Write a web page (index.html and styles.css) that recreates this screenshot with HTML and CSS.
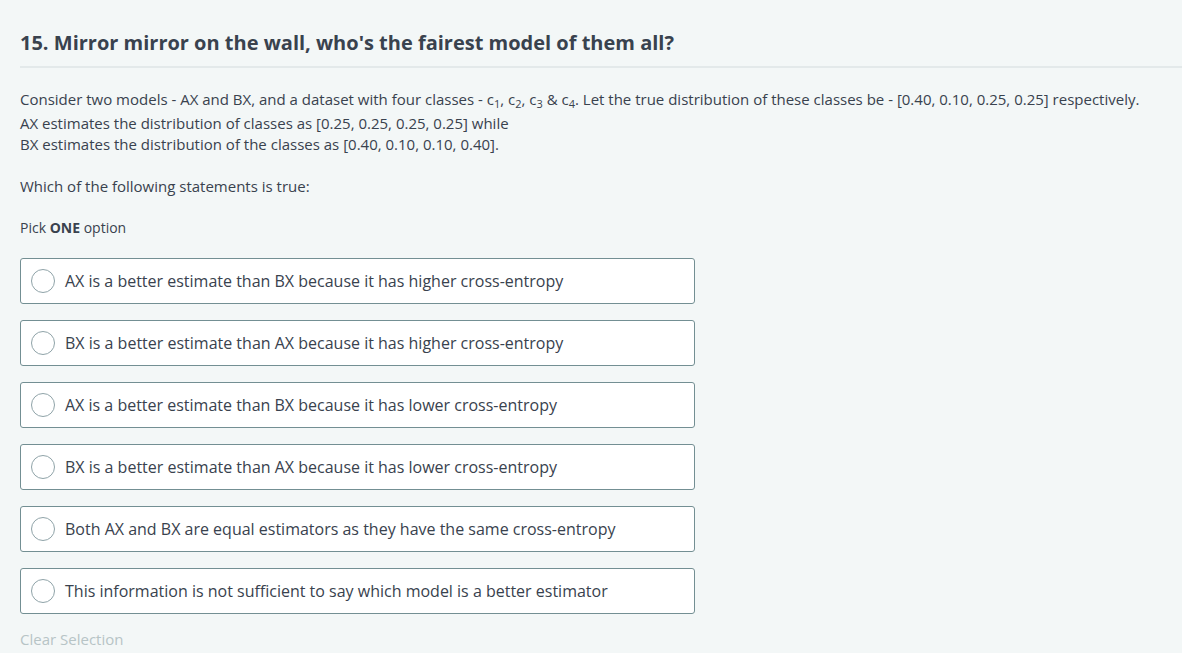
FILE: index.html
```html
<!DOCTYPE html>
<html>
<head>
<meta charset="utf-8">
<link rel="stylesheet" href="styles.css">
</head>
<body>
<div class="page">
  <h1 class="title">15. Mirror mirror on the wall, who's the fairest model of them all?</h1>
  <div class="statement">
    <p class="para">Consider two models - AX and BX, and a dataset with four classes - c<sub>1</sub>, c<sub>2</sub>, c<sub>3</sub> &amp; c<sub>4</sub>. Let the true distribution of these classes be - [0.40, 0.10, 0.25, 0.25] respectively.<br>AX estimates the distribution of classes as [0.25, 0.25, 0.25, 0.25] while<br>BX estimates the distribution of the classes as [0.40, 0.10, 0.10, 0.40].</p>
    <p class="para">Which of the following statements is true:</p>
  </div>
  <p class="pick">Pick <b>ONE</b> option</p>
  <div class="options">
    <label class="option"><span class="radio"></span><span class="otext">AX is a better estimate than BX because it has higher cross-entropy</span></label>
    <label class="option"><span class="radio"></span><span class="otext">BX is a better estimate than AX because it has higher cross-entropy</span></label>
    <label class="option"><span class="radio"></span><span class="otext">AX is a better estimate than BX because it has lower cross-entropy</span></label>
    <label class="option"><span class="radio"></span><span class="otext">BX is a better estimate than AX because it has lower cross-entropy</span></label>
    <label class="option"><span class="radio"></span><span class="otext">Both AX and BX are equal estimators as they have the same cross-entropy</span></label>
    <label class="option"><span class="radio"></span><span class="otext">This information is not sufficient to say which model is a better estimator</span></label>
  </div>
  <div class="clear">Clear Selection</div>
</div>
</body>
</html>
```
FILE: styles.css
```css
html, body {
  margin: 0;
  padding: 0;
  background: #f3f7f7;
}
body {
  font-family: "Open Sans", "Noto Sans", sans-serif;
  color: #39424e;
}
.page {
  padding: 29px 0 0 20px;
}
.title {
  margin: 0;
  font-size: 20px;
  font-weight: 700;
  line-height: 27px;
  padding-bottom: 10px;
  border-bottom: 2px solid #e3e9ea;
}
.statement {
  padding-top: 21px;
}
.para {
  margin: 0 0 21px 0;
  font-size: 15px;
  line-height: 21px;
}
sub {
  font-size: 11px;
  line-height: 19px;
  vertical-align: -3px;
}
.pick {
  margin: 0 0 20px 0;
  font-size: 14px;
  line-height: 20px;
}
.pick b {
  font-weight: 700;
}
.options {
  display: flex;
  flex-direction: column;
  gap: 16px;
  width: 675px;
}
.option {
  display: flex;
  align-items: center;
  height: 44px;
  background: #fff;
  border: 1px solid #738f93;
  border-radius: 3px;
  padding-left: 10px;
  gap: 10px;
}
.radio {
  width: 22px;
  height: 22px;
  border: 1px solid #8fa3a8;
  border-radius: 50%;
  background: #fff;
  flex: none;
}
.otext {
  font-size: 16px;
  line-height: 22px;
}
.clear {
  margin-top: 15px;
  font-size: 15px;
  color: #b7c4c6;
  line-height: 20px;
}
```
